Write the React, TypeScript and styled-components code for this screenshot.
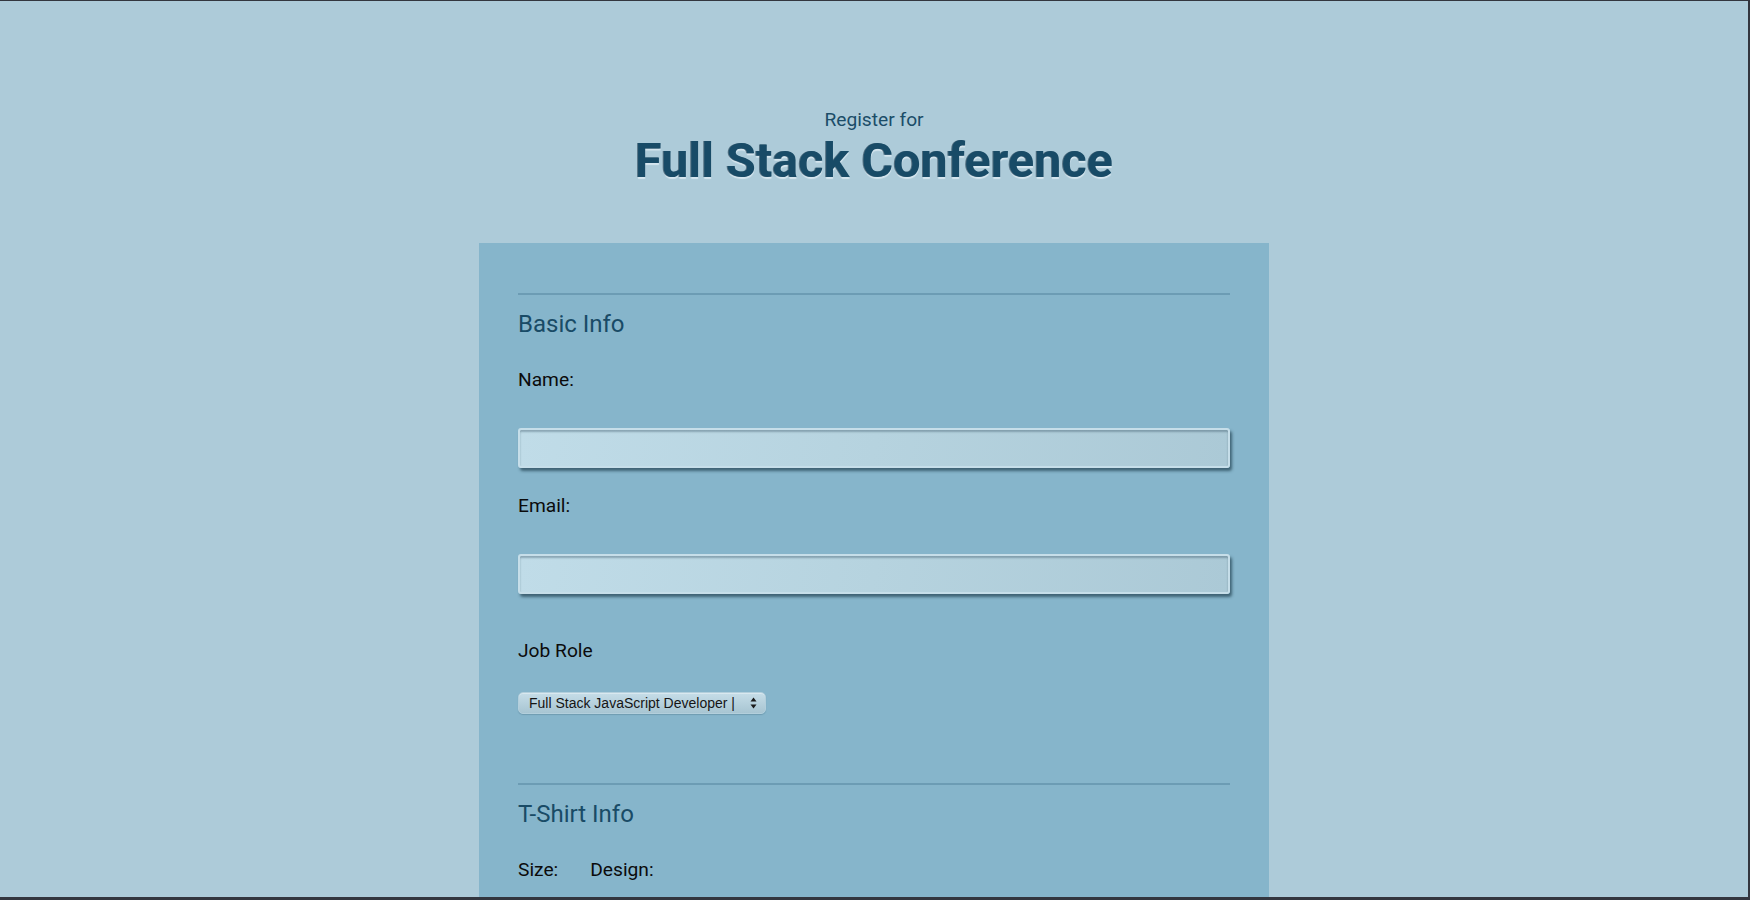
import React from "react";
import styled, { createGlobalStyle } from "styled-components";

const GlobalStyle = createGlobalStyle`
  html, body {
    margin: 0;
    padding: 0;
    background: #adcbd9;
  }
  * { box-sizing: border-box; }
`;

const Frame = styled.div`
  height: 900px;
  overflow: hidden;
  background: #adcbd9;
  border-top: 1px solid #33363f;
  border-right: 2px solid #33363f;
  border-bottom: 3px solid #33363f;
  font-family: Roboto, "Noto Sans", sans-serif;
`;

const Header = styled.header`
  padding-top: 107px;
  text-align: center;
  color: #1b4d68;
`;

const Kicker = styled.div`
  font-size: 19.2px;
  line-height: 24px;
  font-weight: 400;
`;

const Title = styled.h1`
  margin: 0;
  font-size: 48.5px;
  line-height: 58px;
  font-weight: 700;
  color: #184b67;
  text-shadow: -1px 0 0 rgba(5, 35, 55, 0.55), 0 2px 1px rgba(235, 245, 250, 0.65);
`;

const Panel = styled.form`
  width: 790px;
  margin: 53px auto 0;
  background: #86b5cb;
  padding: 50px 39px 40px;
  min-height: 700px;
`;

const Section = styled.fieldset`
  border: 0;
  margin: 0;
  padding: 0;
  border-top: 2px solid #6c9cb4;
  & + & {
    margin-top: 69px;
  }
`;

const Legend = styled.h2`
  margin: 15px 0 0;
  font-size: 24px;
  line-height: 28px;
  font-weight: 400;
  color: #194b66;
`;

const Label = styled.label<{ $gap?: number }>`
  display: block;
  margin-top: ${(p) => p.$gap ?? 30}px;
  font-size: 19.2px;
  line-height: 24px;
  color: #0b0b0b;
`;

const TextInput = styled.input`
  display: block;
  width: 100%;
  height: 40px;
  margin-top: 36px;
  border: 2px solid #c6dee9;
  border-radius: 3px;
  background: linear-gradient(100deg, #c0dce8 0%, #b6d3df 50%, #abc9d6 100%);
  box-shadow: inset 0 2px 2px rgba(40, 70, 85, 0.35), 2px 3px 3px rgba(25, 55, 70, 0.65);
  outline: none;
  font: inherit;
`;

const SelectWrap = styled.div`
  position: relative;
  width: 248px;
  margin-top: 29px;
`;

const Select = styled.select`
  appearance: none;
  -webkit-appearance: none;
  display: block;
  width: 248px;
  height: 22px;
  padding: 0 24px 0 10px;
  border: 1px solid #b3cfdc;
  border-radius: 5px;
  background: linear-gradient(180deg, #c6dde8 0%, #b7d1dd 50%, #a8c5d2 100%);
  box-shadow: inset 0 1px 0 rgba(255, 255, 255, 0.35), 0 1px 1px rgba(40, 80, 100, 0.25);
  font-family: "Liberation Sans", Arial, sans-serif;
  font-size: 14px;
  color: #151515;
  outline: none;
`;

const Arrows = styled.svg`
  position: absolute;
  right: 9px;
  top: 5px;
  width: 7px;
  height: 12px;
  pointer-events: none;
`;

const InlineRow = styled.div`
  display: flex;
  gap: 32px;
  margin-top: 30px;
`;

const InlineLabel = styled.label`
  font-size: 19.2px;
  line-height: 24px;
  color: #0b0b0b;
`;

export default function App() {
  return (
    <>
      <GlobalStyle />
      <Frame>
        <Header>
          <Kicker>Register for</Kicker>
          <Title>Full Stack Conference</Title>
        </Header>
        <Panel onSubmit={(e) => e.preventDefault()}>
          <Section>
            <Legend>Basic Info</Legend>
            <Label htmlFor="name">Name:</Label>
            <TextInput id="name" type="text" />
            <Label htmlFor="mail" $gap={26}>Email:</Label>
            <TextInput id="mail" type="email" />
            <Label htmlFor="title" $gap={45}>Job Role</Label>
            <SelectWrap>
              <Select id="title" defaultValue="full-stack">
                <option value="full-stack">Full Stack JavaScript Developer |</option>
                <option value="front-end">Front End Developer</option>
                <option value="back-end">Back End Developer</option>
                <option value="designer">Designer</option>
                <option value="student">Student</option>
                <option value="other">Other</option>
              </Select>
              <Arrows viewBox="0 0 7 12" aria-hidden="true">
                <path d="M3.5 0.5 L6.5 4.5 L0.5 4.5 Z" fill="#1a1a1a" />
                <path d="M3.5 11.5 L6.5 7.5 L0.5 7.5 Z" fill="#1a1a1a" />
              </Arrows>
            </SelectWrap>
          </Section>
          <Section>
            <Legend>T-Shirt Info</Legend>
            <InlineRow>
              <InlineLabel htmlFor="size">Size:</InlineLabel>
              <InlineLabel htmlFor="design">Design:</InlineLabel>
            </InlineRow>
          </Section>
        </Panel>
      </Frame>
    </>
  );
}
